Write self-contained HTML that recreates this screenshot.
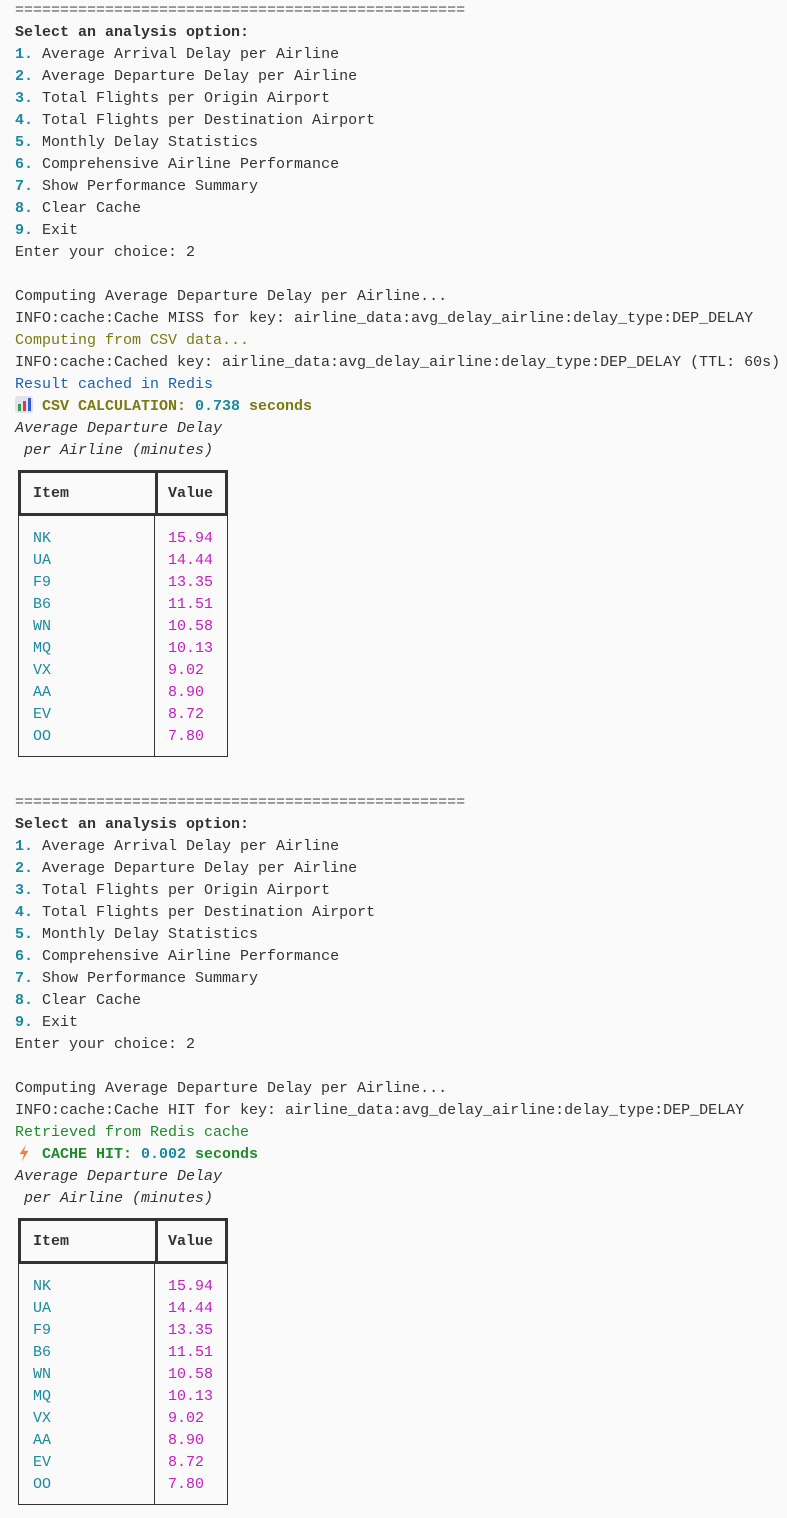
<!DOCTYPE html>
<html><head><meta charset="utf-8"><style>
body{margin:0;background:#fafafa;width:787px;height:1518px;position:relative;overflow:hidden;font-family:"Liberation Mono",monospace;font-size:15px;color:#333;}
.blk{position:absolute;left:15px;white-space:pre;line-height:22px;}
.n{color:#1a8aa0;font-weight:bold}
.b{font-weight:bold}
.eq{color:#555}
.ol{color:#7a7a10}
.bl{color:#1b62b0}
.gr{color:#1f8a2a}
.i{font-style:italic}
.tb{position:absolute;left:18px;width:210px;}
.hd{height:40px;border:3px solid #333;position:relative;}
.hd .v{position:absolute;left:134px;top:0;bottom:0;border-left:3px solid #333;}
.hd span{position:absolute;top:12px;font-weight:bold}
.bd{position:absolute;left:0;top:46px;width:208px;border:1px solid #333;border-top:none;}
.bd .v{position:absolute;left:135px;top:0;bottom:0;border-left:1px solid #333;}
.row{position:relative;height:22px;line-height:22px;}
.row .a{position:absolute;left:14px;color:#1a8aa0}
.row .c{position:absolute;left:149px;color:#c020c0}
</style></head><body>

<div class="blk" style="top:0px"><span class="eq">==================================================</span>
<span class="b">Select an analysis option:</span>
<span class="n">1.</span> Average Arrival Delay per Airline
<span class="n">2.</span> Average Departure Delay per Airline
<span class="n">3.</span> Total Flights per Origin Airport
<span class="n">4.</span> Total Flights per Destination Airport
<span class="n">5.</span> Monthly Delay Statistics
<span class="n">6.</span> Comprehensive Airline Performance
<span class="n">7.</span> Show Performance Summary
<span class="n">8.</span> Clear Cache
<span class="n">9.</span> Exit
Enter your choice: 2

Computing Average Departure Delay per Airline...
INFO:cache:Cache MISS for key: airline_data:avg_delay_airline:delay_type:DEP_DELAY
<span class="ol">Computing from CSV data...</span>
INFO:cache:Cached key: airline_data:avg_delay_airline:delay_type:DEP_DELAY (TTL: 60s)
<span class="bl">Result cached in Redis</span>
<span style="display:inline-block;width:18px;height:17px;vertical-align:-3px;background:#e2e2e8;border-radius:3px;position:relative;margin-right:9px"><i style="position:absolute;left:3px;bottom:2px;width:3px;height:7px;background:#3a9a4a"></i><i style="position:absolute;left:8px;bottom:2px;width:3px;height:10px;background:#e0306a"></i><i style="position:absolute;left:13px;bottom:2px;width:3px;height:13px;background:#3060d0"></i></span><span class="b ol">CSV CALCULATION: </span><span class="n">0.738</span><span class="b ol"> seconds</span>
<span class="i">Average Departure Delay</span>
<span class="i"> per Airline (minutes)</span></div>

<div class="tb" style="top:470px">
<div class="hd"><div class="v"></div><span style="left:12px">Item</span><span style="left:147px">Value</span></div>
<div class="bd" style="height:240px"><div class="v"></div><div style="height:12px"></div>
<div class="row"><span class="a">NK</span><span class="c">15.94</span></div>
<div class="row"><span class="a">UA</span><span class="c">14.44</span></div>
<div class="row"><span class="a">F9</span><span class="c">13.35</span></div>
<div class="row"><span class="a">B6</span><span class="c">11.51</span></div>
<div class="row"><span class="a">WN</span><span class="c">10.58</span></div>
<div class="row"><span class="a">MQ</span><span class="c">10.13</span></div>
<div class="row"><span class="a">VX</span><span class="c">9.02</span></div>
<div class="row"><span class="a">AA</span><span class="c">8.90</span></div>
<div class="row"><span class="a">EV</span><span class="c">8.72</span></div>
<div class="row"><span class="a">OO</span><span class="c">7.80</span></div>
</div></div>

<div class="blk" style="top:792px"><span class="eq">==================================================</span>
<span class="b">Select an analysis option:</span>
<span class="n">1.</span> Average Arrival Delay per Airline
<span class="n">2.</span> Average Departure Delay per Airline
<span class="n">3.</span> Total Flights per Origin Airport
<span class="n">4.</span> Total Flights per Destination Airport
<span class="n">5.</span> Monthly Delay Statistics
<span class="n">6.</span> Comprehensive Airline Performance
<span class="n">7.</span> Show Performance Summary
<span class="n">8.</span> Clear Cache
<span class="n">9.</span> Exit
Enter your choice: 2

Computing Average Departure Delay per Airline...
INFO:cache:Cache HIT for key: airline_data:avg_delay_airline:delay_type:DEP_DELAY
<span class="gr">Retrieved from Redis cache</span>
<svg width="18" height="18" viewBox="0 0 16 16" style="vertical-align:-4px;margin-right:9px"><path d="M10 0.5 L4 9 L8 9 L6 15.5 L12 6 L8 6 Z" fill="#f0804a"/></svg><span class="b gr">CACHE HIT: </span><span class="n">0.002</span><span class="b gr"> seconds</span>
<span class="i">Average Departure Delay</span>
<span class="i"> per Airline (minutes)</span></div>

<div class="tb" style="top:1218px">
<div class="hd"><div class="v"></div><span style="left:12px">Item</span><span style="left:147px">Value</span></div>
<div class="bd" style="height:240px"><div class="v"></div><div style="height:12px"></div>
<div class="row"><span class="a">NK</span><span class="c">15.94</span></div>
<div class="row"><span class="a">UA</span><span class="c">14.44</span></div>
<div class="row"><span class="a">F9</span><span class="c">13.35</span></div>
<div class="row"><span class="a">B6</span><span class="c">11.51</span></div>
<div class="row"><span class="a">WN</span><span class="c">10.58</span></div>
<div class="row"><span class="a">MQ</span><span class="c">10.13</span></div>
<div class="row"><span class="a">VX</span><span class="c">9.02</span></div>
<div class="row"><span class="a">AA</span><span class="c">8.90</span></div>
<div class="row"><span class="a">EV</span><span class="c">8.72</span></div>
<div class="row"><span class="a">OO</span><span class="c">7.80</span></div>
</div></div>

</body></html>
